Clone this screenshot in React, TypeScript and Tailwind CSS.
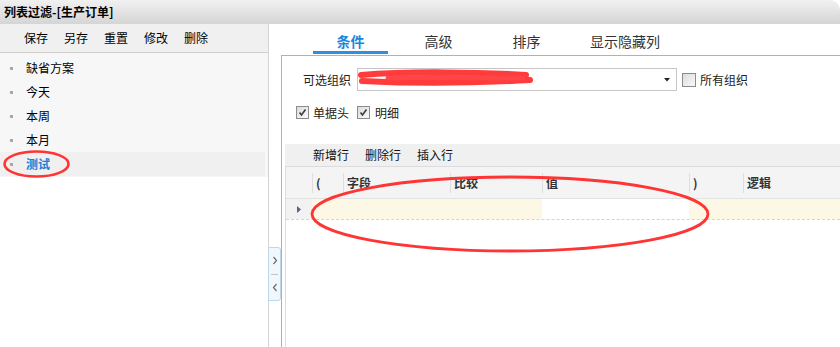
import React from 'react';

const plans = ['缺省方案', '今天', '本周', '本月', '测试'];
const tabs = ['条件', '高级', '排序', '显示隐藏列'];

const Check: React.FC<{ checked?: boolean; size?: string }> = ({ checked, size = 'w-[13px] h-[13px]' }) => (
  <span className={`${size} shrink-0 border border-[#8c8c8c] bg-gradient-to-br from-[#dcdcdc] to-[#fafafa] flex items-center justify-center`}>
    {checked && (
      <svg width="9" height="9" viewBox="0 0 9 9">
        <path d="M1.5 4.5 L3.5 7 L7.5 1.5" fill="none" stroke="#3c3c3c" strokeWidth="1.6" />
      </svg>
    )}
  </span>
);

const HeadCell: React.FC<{ w: string; label: string; first?: boolean }> = ({ w, label }) => (
  <div className={`${w} h-full flex items-center shrink-0`}>
    <div className="w-px h-[20px] bg-[#dedede]" />
    <span className="pl-[3px] font-bold text-[#333]">{label}</span>
  </div>
);

export default function App() {
  return (
    <div className="relative w-[840px] h-[347px] overflow-hidden bg-white text-[12px] text-black font-['Noto_Sans_CJK_SC','Liberation_Sans',sans-serif]">
      {/* title bar */}
      <div className="h-[24px] flex items-center pl-[4px] bg-gradient-to-b from-[#f1f1f1] to-[#d5d5d5] rounded-tr-[10px] font-bold leading-none">
        列表过滤-[生产订单]
      </div>

      <div className="flex h-[323px]">
        {/* left panel */}
        <aside className="w-[269px] flex flex-col border-r border-[#d4d4d4]">
          <div className="h-[28px] bg-[#f0f0f0] flex items-center pl-[24px] gap-[16px] leading-none">
            <span>保存</span>
            <span>另存</span>
            <span>重置</span>
            <span>修改</span>
            <span>删除</span>
          </div>
          <div className="flex-1 border-t border-[#d0d0d0]">
            <ul className="bg-[#f7f7f7] pt-[3px] pb-[1px]">
              {plans.map((p, i) => {
                const sel = i === plans.length - 1;
                return (
                  <li
                    key={p}
                    className={`h-[24px] flex items-center pl-[10px] mr-[3px] ${sel ? 'bg-[#f0f0f0] text-[#1a7fd6] font-bold' : ''}`}
                  >
                    <span className="w-[3px] h-[3px] bg-[#a8a8a8] mr-[13px]" />
                    {p}
                  </li>
                );
              })}
            </ul>
          </div>
        </aside>

        {/* splitter */}
        <div className="w-[12px] flex flex-col pt-[223px]">
          <div className="-ml-px w-[13px] h-[54px] bg-[#f1f8fd] border border-[#bcd6ec] rounded-r-[3px] flex flex-col">
            <div className="flex-1 flex items-center justify-center">
              <svg width="6" height="9" viewBox="0 0 6 9">
                <path d="M1.5 1 L4.5 4.5 L1.5 8" fill="none" stroke="#6b6b6b" strokeWidth="1.2" />
              </svg>
            </div>
            <div className="h-px mx-[2px] bg-[#c4c4c4]" />
            <div className="flex-1 flex items-center justify-center">
              <svg width="6" height="9" viewBox="0 0 6 9">
                <path d="M4.5 1 L1.5 4.5 L4.5 8" fill="none" stroke="#6b6b6b" strokeWidth="1.2" />
              </svg>
            </div>
          </div>
        </div>

        {/* right panel */}
        <main className="flex-1 flex flex-col">
          <div className="h-[31px] flex pl-[32px] text-[14px]">
            {tabs.map((t, i) => (
              <div key={t} className={`${i === 3 ? 'w-[96px]' : 'w-[75px] mr-[13px]'} flex flex-col items-center`}>
                <span className={`mt-[8px] leading-[19px] ${i === 0 ? 'text-[#1b86dc] font-bold' : 'text-[#333]'}`}>{t}</span>
                {i === 0 && <div className="mt-auto mb-[1px] h-[3px] w-full bg-[#2f8fde]" />}
              </div>
            ))}
          </div>

          <div className="flex-1 border-t border-l border-[#a9b3bf] flex flex-col">
            {/* org row */}
            <div className="mt-[12px] h-[23px] flex items-center pl-[21px]">
              <span className="w-[48px] text-[#222]">可选组织</span>
              <div className="ml-[6px] w-[320px] h-[23px] border border-[#c6c6c6] relative flex items-center">
                <svg className="absolute left-0 top-0" width="180" height="21" viewBox="0 0 180 21">
                  <rect x="8" y="12" width="18" height="2" fill="#333" />
                  <rect x="150" y="11" width="10" height="2" fill="#333" />
                  <path d="M3 6 C50 2, 120 3, 168 6" fill="none" stroke="#ff3b3b" strokeWidth="6" strokeLinecap="round" />
                  <path d="M4 12 C60 15, 120 14, 172 11" fill="none" stroke="#ff3b3b" strokeWidth="6" strokeLinecap="round" />
                  <path d="M30 9 C80 8, 130 9, 165 9" fill="none" stroke="#ff4545" strokeWidth="5" strokeLinecap="round" />
                </svg>
                <svg className="absolute right-[6px] top-[9px]" width="6" height="4" viewBox="0 0 6 4">
                  <path d="M0 0 L6 0 L3 3.5 Z" fill="#222" />
                </svg>
              </div>
              <span className="ml-[5px]">
                <Check size="w-[14px] h-[14px]" />
              </span>
              <span className="ml-[4px] text-[#222]">所有组织</span>
            </div>

            {/* checkbox row */}
            <div className="mt-[15px] h-[13px] flex items-center pl-[14px] text-[#222]">
              <Check checked />
              <span className="ml-[4px]">单据头</span>
              <span className="ml-[8px]">
                <Check checked />
              </span>
              <span className="ml-[5px]">明细</span>
            </div>

            {/* grid */}
            <div className="mt-[25px] ml-[3px] flex-1 flex flex-col">
              <div className="h-[23px] bg-[#f0f0f0] flex items-center pl-[28px] gap-[16px] text-[#111] border-b border-[#dcdcdc]">
                <span>新增行</span>
                <span>删除行</span>
                <span>插入行</span>
              </div>
              <div className="flex-1 border-l border-[#dcdcdc]">
                <div className="h-[32px] flex bg-[#f4f4f4] border-b border-[#e2e2e2]">
                  <div className="w-[26px] shrink-0" />
                  <HeadCell w="w-[31px]" label="(" />
                  <HeadCell w="w-[107px]" label="字段" />
                  <HeadCell w="w-[92px]" label="比较" />
                  <HeadCell w="w-[147px]" label="值" />
                  <HeadCell w="w-[54px]" label=")" />
                  <HeadCell w="flex-1" label="逻辑" />
                </div>
                <div className="h-[21px] flex border-b border-dashed border-[#d4d4d4]">
                  <div className="w-[26px] shrink-0 bg-[#f2f2f2] flex items-center justify-center">
                    <svg width="4" height="7" viewBox="0 0 4 7">
                      <path d="M0 0 L4 3.5 L0 7 Z" fill="#5d6088" />
                    </svg>
                  </div>
                  <div className="w-[230px] shrink-0 bg-[#fdf7e6]" />
                  <div className="w-[147px] shrink-0 bg-white" />
                  <div className="flex-1 bg-[#fdf7e6]" />
                </div>
              </div>
            </div>
          </div>
        </main>
      </div>

      {/* red annotation marks */}
      <svg className="absolute left-0 top-0 pointer-events-none" width="840" height="347" viewBox="0 0 840 347">
        <ellipse cx="36.5" cy="164" rx="32" ry="12.5" fill="none" stroke="#ff3434" strokeWidth="2.6" />
        <ellipse cx="510" cy="214" rx="198" ry="37" fill="none" stroke="#ff3434" strokeWidth="2.8" />
      </svg>
    </div>
  );
}
